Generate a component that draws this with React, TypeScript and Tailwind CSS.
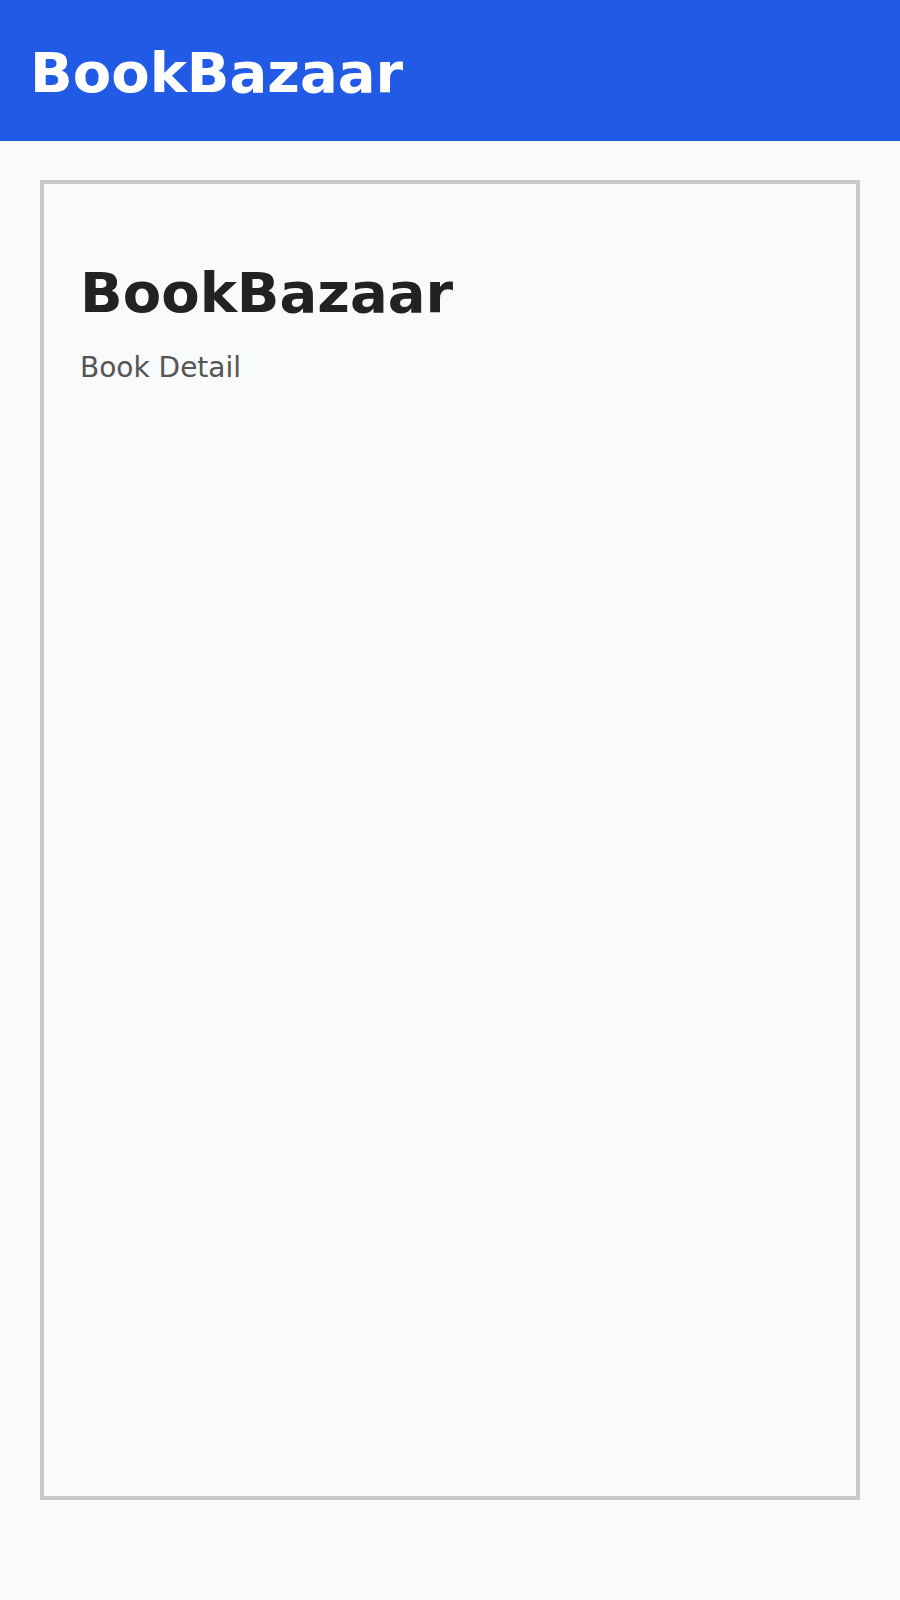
import React from 'react';

const App: React.FC = () => {
    return (
        <div className="min-h-[1600px] bg-[#f9fafb] font-['DejaVu_Sans',sans-serif]">
            <header className="h-[141px] bg-[#215be5] pl-[30px] pt-[5px] flex items-center">
                <h1 className="text-[56px] font-bold text-white leading-none">BookBazaar</h1>
            </header>
            <main className="px-10 pt-[39px]">
                <section className="h-[1320px] border-4 border-[#c8c8c8] px-9 pt-[81px]">
                    <h2 className="text-[56px] font-bold text-[#222222] leading-none">BookBazaar</h2>
                    <p className="mt-[33px] text-[28px] text-[#555555] leading-none">Book Detail</p>
                </section>
            </main>
        </div>
    );
};

export default App;
